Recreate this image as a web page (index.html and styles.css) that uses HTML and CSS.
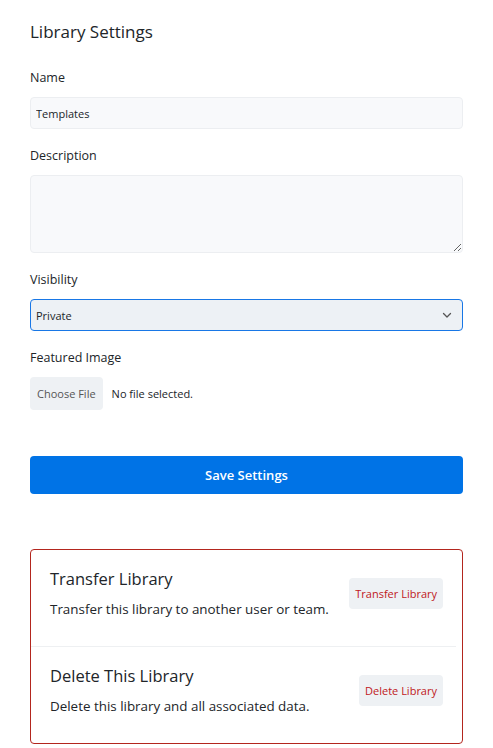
FILE: index.html
```html
<!DOCTYPE html>
<html lang="en">

<head>
  <meta charset="UTF-8" />
  <meta name="viewport" content="width=device-width, initial-scale=1.0" />
  <title>Library Settings</title>
  <link rel="stylesheet" href="styles.css">
</head>

<body>
  <div class="w">
    <h2 class="title">Library Settings</h2>

    <!-- 基本设置表单 -->
    <form class="settings">
      <div class="field">
        <label for="name">Name</label>
        <input type="text" id="name" class="input" value="Templates" />
      </div>
      <div class="field">
        <label for="desc">Description</label>
        <textarea id="desc" class="input area"></textarea>
      </div>
      <div class="field">
        <label for="vis">Visibility</label>
        <div class="select">
          <span>Private</span>
          <svg width="12" height="12" viewBox="0 0 12 12"><path d="M2.5 4.5 6 8l3.5-3.5" fill="none" stroke="#555" stroke-width="1.3" stroke-linecap="round" stroke-linejoin="round"/></svg>
        </div>
      </div>
      <div class="field">
        <label>Featured Image</label>
        <div class="file">
          <span class="file-btn">Choose File</span>
          <span class="file-name">No file selected.</span>
        </div>
      </div>
      <button type="button" class="save">Save Settings</button>
    </form>

    <!-- 危险操作 -->
    <div class="danger">
      <div class="row">
        <div class="txt">
          <h3>Transfer Library</h3>
          <p>Transfer this library to another user or team.</p>
        </div>
        <button type="button" class="btn-red">Transfer Library</button>
      </div>
      <div class="row">
        <div class="txt">
          <h3>Delete This Library</h3>
          <p>Delete this library and all associated data.</p>
        </div>
        <button type="button" class="btn-red">Delete Library</button>
      </div>
    </div>
  </div>
</body>

</html>
```

FILE: styles.css
```css
* {
  margin: 0;
  padding: 0;
  box-sizing: border-box;
}

body {
  font-family: "Open Sans", "Noto Sans", sans-serif;
  color: #212529;
  background: #fff;
}

.w {
  width: 433px;
  margin-left: 30px;
  padding-top: 20px;
}

.title {
  font-size: 17px;
  font-weight: 400;
  line-height: 24px;
  margin-bottom: 25px;
}

.field {
  margin-bottom: 18px;
}

.field label {
  display: block;
  font-size: 12.5px;
  line-height: 18px;
  margin-bottom: 10px;
}

.input {
  display: block;
  width: 100%;
  height: 32px;
  border: 1px solid #eceef1;
  border-radius: 4px;
  background: #f8f9fb;
  font: 11px "Open Sans", "Noto Sans", sans-serif;
  color: #212529;
  padding: 0 5px;
  outline: none;
}

.area {
  height: 78px;
  resize: vertical;
}

.select {
  display: flex;
  justify-content: space-between;
  align-items: center;
  height: 32px;
  border: 1px solid #1877e6;
  border-radius: 4px;
  background: #edf1f5;
  font-size: 11px;
  padding: 0 9px 0 5px;
}

.file {
  display: flex;
  align-items: center;
  gap: 9px;
  font-size: 11px;
}

.file-btn {
  display: flex;
  align-items: center;
  height: 33px;
  padding: 0 7px;
  background: #eef1f4;
  border-radius: 4px;
  color: #555;
}

.save {
  display: block;
  width: 100%;
  height: 38px;
  margin-top: 46px;
  border: none;
  border-radius: 4px;
  background: #0073e6;
  color: #fff;
  font: 600 13px "Open Sans", "Noto Sans", sans-serif;
  cursor: pointer;
}

.danger {
  margin-top: 55px;
  border: 1px solid #b3261e;
  border-radius: 4px;
}

.danger .row {
  display: flex;
  justify-content: space-between;
  align-items: center;
  margin-right: 6px;
  padding: 17px 13px 27px 19px;
  border-bottom: 1px solid #eef0f2;
}

.danger .row:last-child {
  border-bottom: none;
}

.danger h3 {
  font-size: 16.5px;
  font-weight: 400;
  line-height: 24px;
  margin-bottom: 8px;
}

.danger p {
  font-size: 13.4px;
  line-height: 20px;
}

.btn-red {
  height: 31px;
  padding: 0 6px;
  border: none;
  border-radius: 4px;
  background: #eef1f4;
  color: #c0181c;
  font: 11px "Open Sans", "Noto Sans", sans-serif;
  cursor: pointer;
}
```
